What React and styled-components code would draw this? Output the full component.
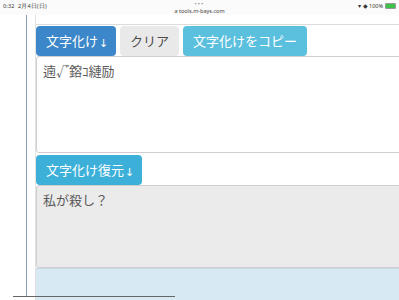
import React from 'react';
import styled, { createGlobalStyle } from 'styled-components';

const GlobalStyle = createGlobalStyle`
  html, body {
    margin: 0;
    padding: 0;
    background: #ffffff;
    overflow: hidden;
  }
  body {
    font-family: "Noto Sans CJK JP", "Noto Sans", sans-serif;
  }
`;

const Screen = styled.div`
  position: relative;
  width: 399px;
  height: 300px;
  overflow: hidden;
  display: flex;
  flex-direction: column;
  background: #fff;
`;

const StatusBar = styled.div`
  height: 15px;
  flex: none;
  display: grid;
  grid-template-columns: 1fr auto 1fr;
  align-items: start;
  padding: 0 3px;
  font-family: "Noto Sans", sans-serif;
  font-size: 5.5px;
  color: #333;
  background: #fbfbfb;
`;

const StatusLeft = styled.div`
  padding-top: 2px;
  letter-spacing: 0.2px;
`;

const StatusCenter = styled.div`
  display: flex;
  flex-direction: column;
  align-items: center;
  line-height: 5px;
  padding-top: 2px;
`;

const Dots = styled.span`
  font-size: 6px;
  color: #888;
  letter-spacing: 1px;
`;

const Url = styled.span`
  color: #444;
  margin-top: 2px;
`;

const StatusRight = styled.div`
  display: flex;
  justify-content: flex-end;
  align-items: center;
  gap: 2px;
  padding-top: 2px;
`;

const Battery = styled.span`
  display: inline-block;
  width: 9px;
  height: 4px;
  border-radius: 1px;
  background: #3fc24a;
  border: 0.5px solid #999;
`;

const Page = styled.div`
  flex: 1;
  display: flex;
  min-height: 0;
`;

const Rail = styled.div`
  width: 26px;
  flex: none;
  border-right: 1px solid #8b9cb6;
  margin-bottom: 3px;
`;

const Gap = styled.div`
  width: 8px;
  flex: none;
`;

const Content = styled.div`
  width: 380px;
  flex: none;
  display: flex;
  flex-direction: column;
  border-left: 1px solid #e2e2e2;
`;

const TopStrip = styled.div`
  height: 9px;
  border-bottom: 1px solid #dcdcdc;
`;

const ButtonRow = styled.div`
  display: flex;
  gap: 4px;
  height: 30px;
  margin-top: 1px;
`;

const Btn = styled.button`
  height: 30px;
  padding: 0 10px;
  border: none;
  border-radius: 4px;
  font-family: "Noto Sans CJK JP", sans-serif;
  font-size: 13px;
  line-height: 30px;
  color: ${({ $variant }) => ($variant === 'plain' ? '#4a4a4a' : '#fff')};
  background: ${({ $variant }) =>
    $variant === 'primary'
      ? '#3b87c9'
      : $variant === 'info'
      ? '#5bc0de'
      : $variant === 'restore'
      ? '#3cb0d8'
      : '#e9e9e9'};
  white-space: nowrap;
`;

const Arrow = styled.span`
  font-family: "DejaVu Sans", sans-serif;
  font-size: 11px;
  display: inline-block;
  width: 7px;
  margin-left: 1px;
  vertical-align: -1px;
`;

const TextBox = styled.div`
  height: ${({ $h }) => $h}px;
  box-sizing: border-box;
  border: 1px solid #cfcfcf;
  border-radius: 3px;
  background: ${({ $muted }) => ($muted ? '#ebebeb' : '#fff')};
  padding: 5px 6px;
  font-size: 13px;
  line-height: 18px;
  color: #5a5a5a;
  position: relative;
  margin-right: -4px;
`;

const ScrollThumb = styled.div`
  position: absolute;
  right: 6px;
  top: 5px;
  width: 2px;
  height: 23px;
  background: #9a9a9a;
  border-radius: 1px;
`;

const Spacer = styled.div`
  height: 1px;
`;

const InfoPanel = styled.div`
  flex: 1;
  background: #d7eaf4;
  border-top: 1px solid #c6d9e2;
`;

const HomeBar = styled.div`
  position: absolute;
  left: 13px;
  bottom: 3px;
  width: 162px;
  height: 1px;
  background: #666;
`;

export default function App() {
  return (
    <>
      <GlobalStyle />
      <Screen>
        <StatusBar>
          <StatusLeft>0:32&nbsp;&nbsp;2月4日(日)</StatusLeft>
          <StatusCenter>
            <Dots>•••</Dots>
            <Url>a tools.m-bays.com</Url>
          </StatusCenter>
          <StatusRight>
            <span>▾ ◆ 100%</span>
            <Battery />
          </StatusRight>
        </StatusBar>
        <Page>
          <Rail />
          <Gap />
          <Content>
            <TopStrip />
            <ButtonRow>
              <Btn $variant="primary">文字化け<Arrow>↓</Arrow></Btn>
              <Btn $variant="plain">クリア</Btn>
              <Btn $variant="info">文字化けをコピー</Btn>
            </ButtonRow>
            <TextBox $h={97}>
              遖√゙鎔ｺ縺励
              <ScrollThumb />
            </TextBox>
            <Spacer />
            <ButtonRow>
              <Btn $variant="restore">文字化け復元<Arrow>↓</Arrow></Btn>
            </ButtonRow>
            <TextBox $h={83} $muted>
              私が殺し？
            </TextBox>
            <InfoPanel />
          </Content>
        </Page>
        <HomeBar />
      </Screen>
    </>
  );
}
